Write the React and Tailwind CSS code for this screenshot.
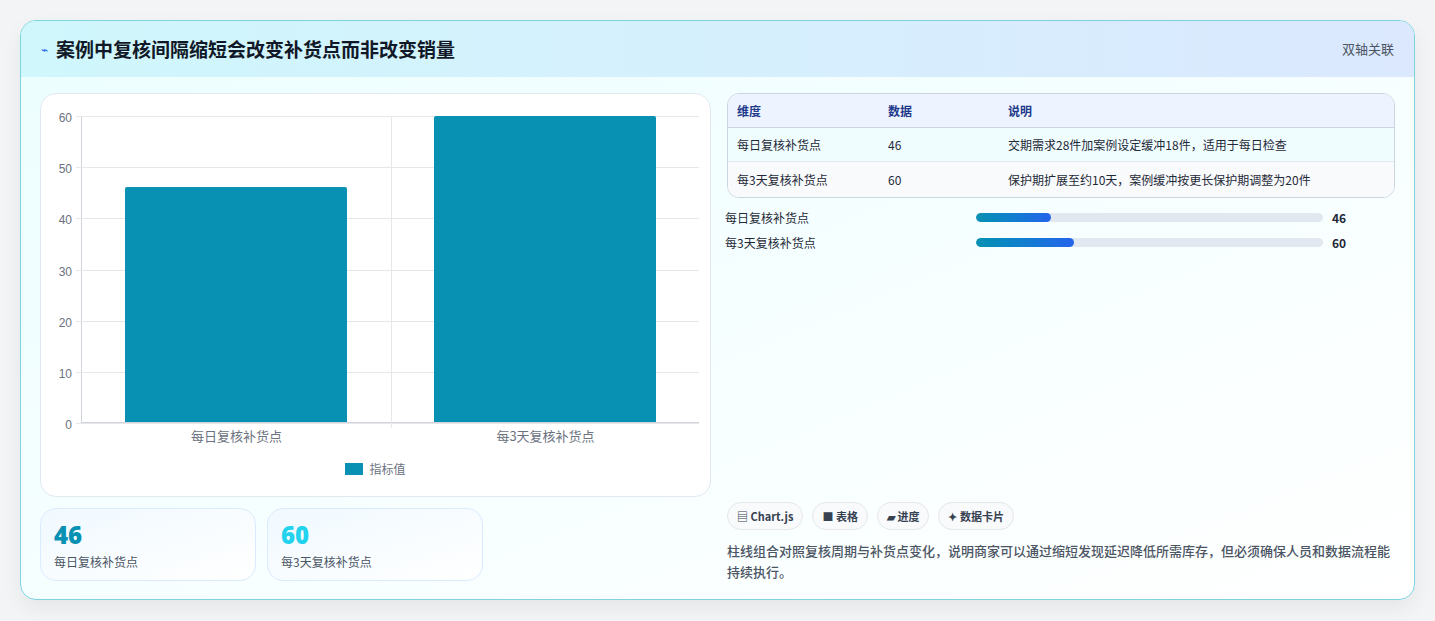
export default function App() {
  const font = { fontFamily: '"Noto Sans CJK SC", "Noto Sans", sans-serif' };
  const yTicks = [60, 50, 40, 30, 20, 10, 0];
  return (
    <div className="w-[1435px] h-[621px] bg-[#f3f4f6] pt-[20px] px-[20px]" style={font}>
      <div className="w-[1395px] h-[580px] rounded-2xl border border-[#7dd3e0] bg-gradient-to-br from-[#ecfeff] to-white shadow-[0_8px_20px_rgba(0,0,0,0.06)] overflow-hidden flex flex-col">
        <div className="h-[56px] shrink-0 flex items-center justify-between px-[20px] bg-gradient-to-r from-[#cff7fc] to-[#dbe8fe]">
          <div className="flex items-center gap-[8px]">
            <span className="text-[#2563eb] text-[12px]">⌁</span>
            <span className="text-[19px] font-bold text-[#111827]">案例中复核间隔缩短会改变补货点而非改变销量</span>
          </div>
          <span className="text-[13px] text-[#4b5563]">双轴关联</span>
        </div>
        <div className="flex gap-[16px] px-[19px] pt-[16px]">
          <div className="w-[671px] flex flex-col gap-[11px]">
            <div className="h-[404px] rounded-2xl border border-[#e2e8f0] bg-white relative">
              <div className="absolute left-[40px] top-[22px] w-[618px] h-[307px] border-l border-b border-[#d1d5db]">
                {yTicks.map((t, i) => (
                  <div key={t} className="absolute left-[-6px] right-0 border-t border-[#e5e7eb]" style={{ top: i * 51.2 }}>
                    <span className="absolute right-[calc(100%+4px)] -top-[8px] text-[12px] text-[#6b7280]" style={{ fontFamily: '"Liberation Sans", sans-serif' }}>{t}</span>
                  </div>
                ))}
                <div className="absolute top-0 bottom-[-6px] left-[309px] border-l border-[#e5e7eb]" />
                <div className="absolute left-[43px] w-[222px] bottom-0 h-[235px] bg-[#0891b2] rounded-t-[2px]" />
                <div className="absolute left-[352px] w-[222px] bottom-0 h-[306px] bg-[#0891b2] rounded-t-[2px]" />
                <div className="absolute top-[310px] left-0 w-[309px] text-center text-[13px] text-[#6b7280]">每日复核补货点</div>
                <div className="absolute top-[310px] left-[309px] w-[309px] text-center text-[13px] text-[#6b7280]">每3天复核补货点</div>
              </div>
              <div className="absolute top-[366px] left-0 right-0 flex justify-center items-center gap-[6px]">
                <span className="w-[18px] h-[12px] bg-[#0891b2]" />
                <span className="text-[12px] text-[#6b7280]">指标值</span>
              </div>
            </div>
            <div className="flex gap-[11px]">
              {[["46", "text-[#0891b2]", "每日复核补货点"], ["60", "text-[#22d3ee]", "每3天复核补货点"]].map(([v, c, l]) => (
                <div key={v} className="w-[216px] h-[73px] rounded-2xl border border-[#dbeafe] bg-gradient-to-br from-[#f0f9ff] to-white px-[13px] pt-[10px]">
                  <div className={`text-[24px] font-extrabold leading-[32px] ${c}`} style={{ fontFamily: '"Open Sans", sans-serif' }}>{v}</div>
                  <div className="text-[12px] text-[#4b5563] mt-[2px]">{l}</div>
                </div>
              ))}
            </div>
          </div>
          <div className="flex-1 flex flex-col h-[489px]">
            <div className="rounded-xl border border-[#cbd5e1] overflow-hidden text-[12px]">
              <div className="flex h-[34px] items-center bg-[#eef4ff] text-[#1e3a8a] font-semibold border-b border-[#cbd5e1]">
                <span className="w-[160px] pl-[9px]">维度</span><span className="w-[120px]">数据</span><span>说明</span>
              </div>
              <div className="flex h-[34px] items-center bg-[#f0fdff] text-[#1f2937] border-b border-[#e2e8f0]">
                <span className="w-[160px] pl-[9px]">每日复核补货点</span><span className="w-[120px]">46</span><span>交期需求28件加案例设定缓冲18件，适用于每日检查</span>
              </div>
              <div className="flex h-[35px] items-center bg-[#f8fafc] text-[#1f2937]">
                <span className="w-[160px] pl-[9px]">每3天复核补货点</span><span className="w-[120px]">60</span><span>保护期扩展至约10天，案例缓冲按更长保护期调整为20件</span>
              </div>
            </div>
            <div className="mt-[12px] flex flex-col gap-[10px] text-[12px] text-[#1f2937] pr-[40px]">
              {[["每日复核补货点", 75, "46"], ["每3天复核补货点", 98, "60"]].map(([l, w, v]) => (
                <div key={l} className="flex items-center h-[15px] -ml-[2px]">
                  <span className="w-[251px]">{l}</span>
                  <div className="w-[347px] h-[9px] rounded-full bg-[#e2e8f0] overflow-hidden">
                    <div className="h-full rounded-full bg-gradient-to-r from-[#0891b2] to-[#2563eb]" style={{ width: w }} />
                  </div>
                  <span className="ml-[9px] font-bold">{v}</span>
                </div>
              ))}
            </div>
            <div className="mt-auto flex gap-[9px] text-[11px] text-[#374151]">
              {["▤ Chart.js", "■ 表格", "▰ 进度", "✦ 数据卡片"].map((c) => (
                <span key={c} className="h-[28px] px-[9px] flex items-center rounded-full border border-[#e5e7eb] bg-[#f8fafc] font-semibold">{c}</span>
              ))}
            </div>
            <p className="mt-[10px] text-[13px] leading-[21px] text-[#4b5563] font-medium">柱线组合对照复核周期与补货点变化，说明商家可以通过缩短发现延迟降低所需库存，但必须确保人员和数据流程能持续执行。</p>
          </div>
        </div>
      </div>
    </div>
  );
}
